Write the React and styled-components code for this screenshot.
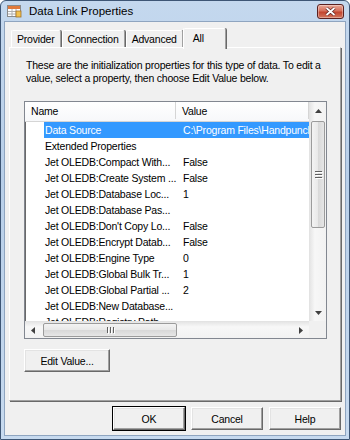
import React from "react";
import styled, { createGlobalStyle, css } from "styled-components";

const Global = createGlobalStyle`
  html, body { margin: 0; padding: 0; background: #fff; }
  * { box-sizing: border-box; }
`;

const Window = styled.div`
  width: 350px;
  height: 440px;
  display: flex;
  flex-direction: column;
  border: 1px solid #3e5675;
  border-radius: 6px 6px 0 0;
  background: linear-gradient(to bottom, #c4d8ee 0%, #b8cfe9 40%, #c7daef 100%);
  padding: 0 3px 3px 3px;
  font-family: "Liberation Sans", Arial, sans-serif;
  font-size: 10.5px;
  letter-spacing: -0.2px;
  color: #000;
  overflow: hidden;
`;

const TitleBar = styled.div`
  height: 21px;
  display: flex;
  align-items: center;
  padding-left: 3px;
  gap: 7px;
`;

const TitleText = styled.div`
  flex: 1;
  font-size: 11.5px;
  letter-spacing: 0;
  color: #000;
`;

const CloseButton = styled.div`
  width: 27px;
  height: 15px;
  margin-right: 2px;
  margin-top: 1px;
  border: 1px solid #5a2020;
  border-radius: 3px;
  background: linear-gradient(to bottom, #e8a898 0%, #d6705c 45%, #c3452f 55%, #d2765e 100%);
  display: flex;
  align-items: center;
  justify-content: center;
  box-shadow: inset 0 0 0 1px rgba(255, 255, 255, 0.35);
`;

const Client = styled.div`
  flex: 1;
  display: flex;
  flex-direction: column;
  background: #f0f0f0;
  border: 1px solid #8fa5c0;
  padding: 4px 4px 5px 4px;
`;

const TabStrip = styled.div`
  display: flex;
  align-items: flex-end;
  padding-left: 2px;
  height: 21px;
  position: relative;
  z-index: 1;
`;

const Tab = styled.div`
  height: 17px;
  padding: 0 5px;
  display: flex;
  align-items: center;
  background: #f0f0f0;
  border-top: 1px solid #fff;
  border-left: 1px solid #fff;
  border-right: 1px solid #a0a0a0;
  box-shadow: 1px 0 0 #696969;
  border-radius: 2px 2px 0 0;
  margin-right: 1px;
  ${(p) =>
    p.$active &&
    css`
      height: 21px;
      margin-left: -1px;
      margin-bottom: -2px;
      padding: 0 10px 3px 9px;
      min-width: 43px;
    `}
`;

const Panel = styled.div`
  height: 354px;
  display: flex;
  flex-direction: column;
  background: #f0f0f0;
  border-top: 1px solid #fff;
  border-left: 1px solid #fff;
  border-right: 1px solid #a0a0a0;
  border-bottom: 1px solid #a0a0a0;
  box-shadow: 1px 1px 0 #696969;
  padding: 11px 13px 0 14px;
`;

const Intro = styled.p`
  margin: 0 0 0 2px;
  line-height: 13px;
  height: 42px;
`;

const ListBox = styled.div`
  height: 238px;
  display: grid;
  grid-template-columns: 1fr 17px;
  grid-template-rows: 1fr 17px;
  background: #fff;
  border: 1px solid #828790;
  box-shadow: inset 1px 1px 0 #696969;
`;

const Viewport = styled.div`
  overflow: hidden;
  display: flex;
  flex-direction: column;
`;

const Header = styled.div`
  height: 20px;
  flex: none;
  display: flex;
  padding-bottom: 2px;
  background: linear-gradient(to bottom, #ffffff 0%, #f7f8fa 100%);
  border-bottom: 1px solid #d5d5d5;
`;

const HeaderCell = styled.div`
  width: ${(p) => p.$w}px;
  flex: ${(p) => (p.$w ? "none" : "1")};
  padding-left: 6px;
  display: flex;
  align-items: center;
  border-right: 1px solid #d5d5d5;
`;

const Row = styled.div`
  height: 16px;
  flex: none;
  display: flex;
  padding-left: 19px;
`;

const RowInner = styled.div`
  flex: 1;
  display: flex;
  align-items: center;
  white-space: nowrap;
  overflow: hidden;
  ${(p) =>
    p.$selected &&
    css`
      background: #3399ff;
      color: #fff;
    `}
`;

const NameCell = styled.div`
  width: 132px;
  flex: none;
  padding-left: 1px;
`;

const ValueCell = styled.div`
  padding-left: 7px;
`;

const VScroll = styled.div`
  display: flex;
  flex-direction: column;
  background: linear-gradient(to right, #e6e6e6, #f7f7f7 30%, #f2f2f2);
  border-left: 1px solid #e3e3e3;
`;

const HScroll = styled.div`
  display: flex;
  align-items: stretch;
  background: linear-gradient(to bottom, #e6e6e6, #f7f7f7 30%, #f2f2f2);
  border-top: 1px solid #e3e3e3;
`;

const Corner = styled.div`
  background: #f0f0f0;
`;

const Arrow = styled.div`
  width: 16px;
  height: 17px;
  flex: none;
  display: flex;
  align-items: center;
  justify-content: center;
`;

const VThumb = styled.div`
  height: 107px;
  margin: 2px 1px 0 1px;
  border: 1px solid #9b9b9b;
  border-radius: 2px;
  background: linear-gradient(to right, #f3f3f3, #e8e8e8 50%, #d8d8d8 51%, #e6e6e6);
  display: flex;
  align-items: center;
  justify-content: center;
`;

const HThumb = styled.div`
  width: 134px;
  margin: 1px 0 1px 2px;
  border: 1px solid #9b9b9b;
  border-radius: 2px;
  background: linear-gradient(to bottom, #f3f3f3, #e8e8e8 50%, #d8d8d8 51%, #e6e6e6);
  display: flex;
  align-items: center;
  justify-content: center;
`;

const Spacer = styled.div`
  flex: 1;
`;

const Grip = styled.div`
  display: flex;
  flex-direction: ${(p) => (p.$vertical ? "column" : "row")};
  gap: 2px;
  & > span {
    display: block;
    background: #606060;
    box-shadow: 1px 1px 0 #fff;
    width: ${(p) => (p.$vertical ? "7px" : "1px")};
    height: ${(p) => (p.$vertical ? "1px" : "6px")};
  }
`;

const Button = styled.div`
  width: ${(p) => p.$w || 72}px;
  height: 23px;
  display: flex;
  align-items: center;
  justify-content: center;
  background: #f0f0f0;
  border: 1px solid;
  border-color: #fff #696969 #696969 #fff;
  box-shadow: inset -1px -1px 0 #a0a0a0, inset 1px 1px 0 #e3e3e3;
  ${(p) =>
    p.$default &&
    css`
      outline: 1px solid #000;
      outline-offset: 0;
    `}
`;

const EditRow = styled.div`
  margin-top: 10px;
`;

const ButtonRow = styled.div`
  display: flex;
  justify-content: flex-end;
  gap: 6px;
  margin-top: 6px;
`;

const rows = [
  ["Data Source", "C:\\Program Files\\Handpunch\\"],
  ["Extended Properties", ""],
  ["Jet OLEDB:Compact With...", "False"],
  ["Jet OLEDB:Create System ...", "False"],
  ["Jet OLEDB:Database Loc...", "1"],
  ["Jet OLEDB:Database Pas...", ""],
  ["Jet OLEDB:Don't Copy Lo...", "False"],
  ["Jet OLEDB:Encrypt Datab...", "False"],
  ["Jet OLEDB:Engine Type", "0"],
  ["Jet OLEDB:Global Bulk Tr...", "1"],
  ["Jet OLEDB:Global Partial ...", "2"],
  ["Jet OLEDB:New Database...", ""],
  ["Jet OLEDB:Registry Path", ""],
];

const AppIcon = () => (
  <svg width="15" height="14" viewBox="0 0 15 14">
    <rect x="0.5" y="1.5" width="13" height="11" fill="#fff" stroke="#8a8a8a" />
    <rect x="1" y="2" width="12" height="3" fill="#e07a3c" />
    <path d="M1 7.5h12M1 10h12M5 5v7M9 5v7" stroke="#b0b0b0" />
    <rect x="9" y="7" width="5" height="6" fill="#f2c14e" stroke="#a0702a" strokeWidth="0.8" />
  </svg>
);

const Tri = ({ dir }) => {
  const pts = {
    up: "0,4 3.5,0 7,4",
    down: "0,0 3.5,4 7,0",
    left: "4,0 0,3.5 4,7",
    right: "0,0 4,3.5 0,7",
  }[dir];
  const vert = dir === "up" || dir === "down";
  return (
    <svg width={vert ? 7 : 4} height={vert ? 4 : 7}>
      <polygon points={pts} fill="#404040" />
    </svg>
  );
};

export default function App() {
  return (
    <>
      <Global />
      <Window>
        <TitleBar>
          <AppIcon />
          <TitleText>Data Link Properties</TitleText>
          <CloseButton>
            <svg width="11" height="9" viewBox="0 0 11 9">
              <path d="M1.5 1l8 7M9.5 1l-8 7" stroke="#5a2020" strokeWidth="3.2" />
              <path d="M1.5 1l8 7M9.5 1l-8 7" stroke="#fff" strokeWidth="1.8" />
            </svg>
          </CloseButton>
        </TitleBar>
        <Client>
          <TabStrip>
            <Tab>Provider</Tab>
            <Tab>Connection</Tab>
            <Tab>Advanced</Tab>
            <Tab $active>All</Tab>
          </TabStrip>
          <Panel>
            <Intro>
              These are the initialization properties for this type of data. To edit a
              value, select a property, then choose Edit Value below.
            </Intro>
            <ListBox>
              <Viewport>
                <Header>
                  <HeaderCell $w={151}>Name</HeaderCell>
                  <HeaderCell>Value</HeaderCell>
                </Header>
                {rows.map(([name, value], i) => (
                  <Row key={name}>
                    <RowInner $selected={i === 0}>
                      <NameCell>{name}</NameCell>
                      <ValueCell>{value}</ValueCell>
                    </RowInner>
                  </Row>
                ))}
              </Viewport>
              <VScroll>
                <Arrow>
                  <Tri dir="up" />
                </Arrow>
                <VThumb>
                  <Grip $vertical>
                    <span />
                    <span />
                    <span />
                  </Grip>
                </VThumb>
                <Spacer />
                <Arrow>
                  <Tri dir="down" />
                </Arrow>
              </VScroll>
              <HScroll>
                <Arrow>
                  <Tri dir="left" />
                </Arrow>
                <HThumb>
                  <Grip>
                    <span />
                    <span />
                    <span />
                  </Grip>
                </HThumb>
                <Spacer />
                <Arrow>
                  <Tri dir="right" />
                </Arrow>
              </HScroll>
              <Corner />
            </ListBox>
            <EditRow>
              <Button $w={86}>Edit Value...</Button>
            </EditRow>
          </Panel>
          <ButtonRow>
            <Button $default>OK</Button>
            <Button>Cancel</Button>
            <Button>Help</Button>
          </ButtonRow>
        </Client>
      </Window>
    </>
  );
}
